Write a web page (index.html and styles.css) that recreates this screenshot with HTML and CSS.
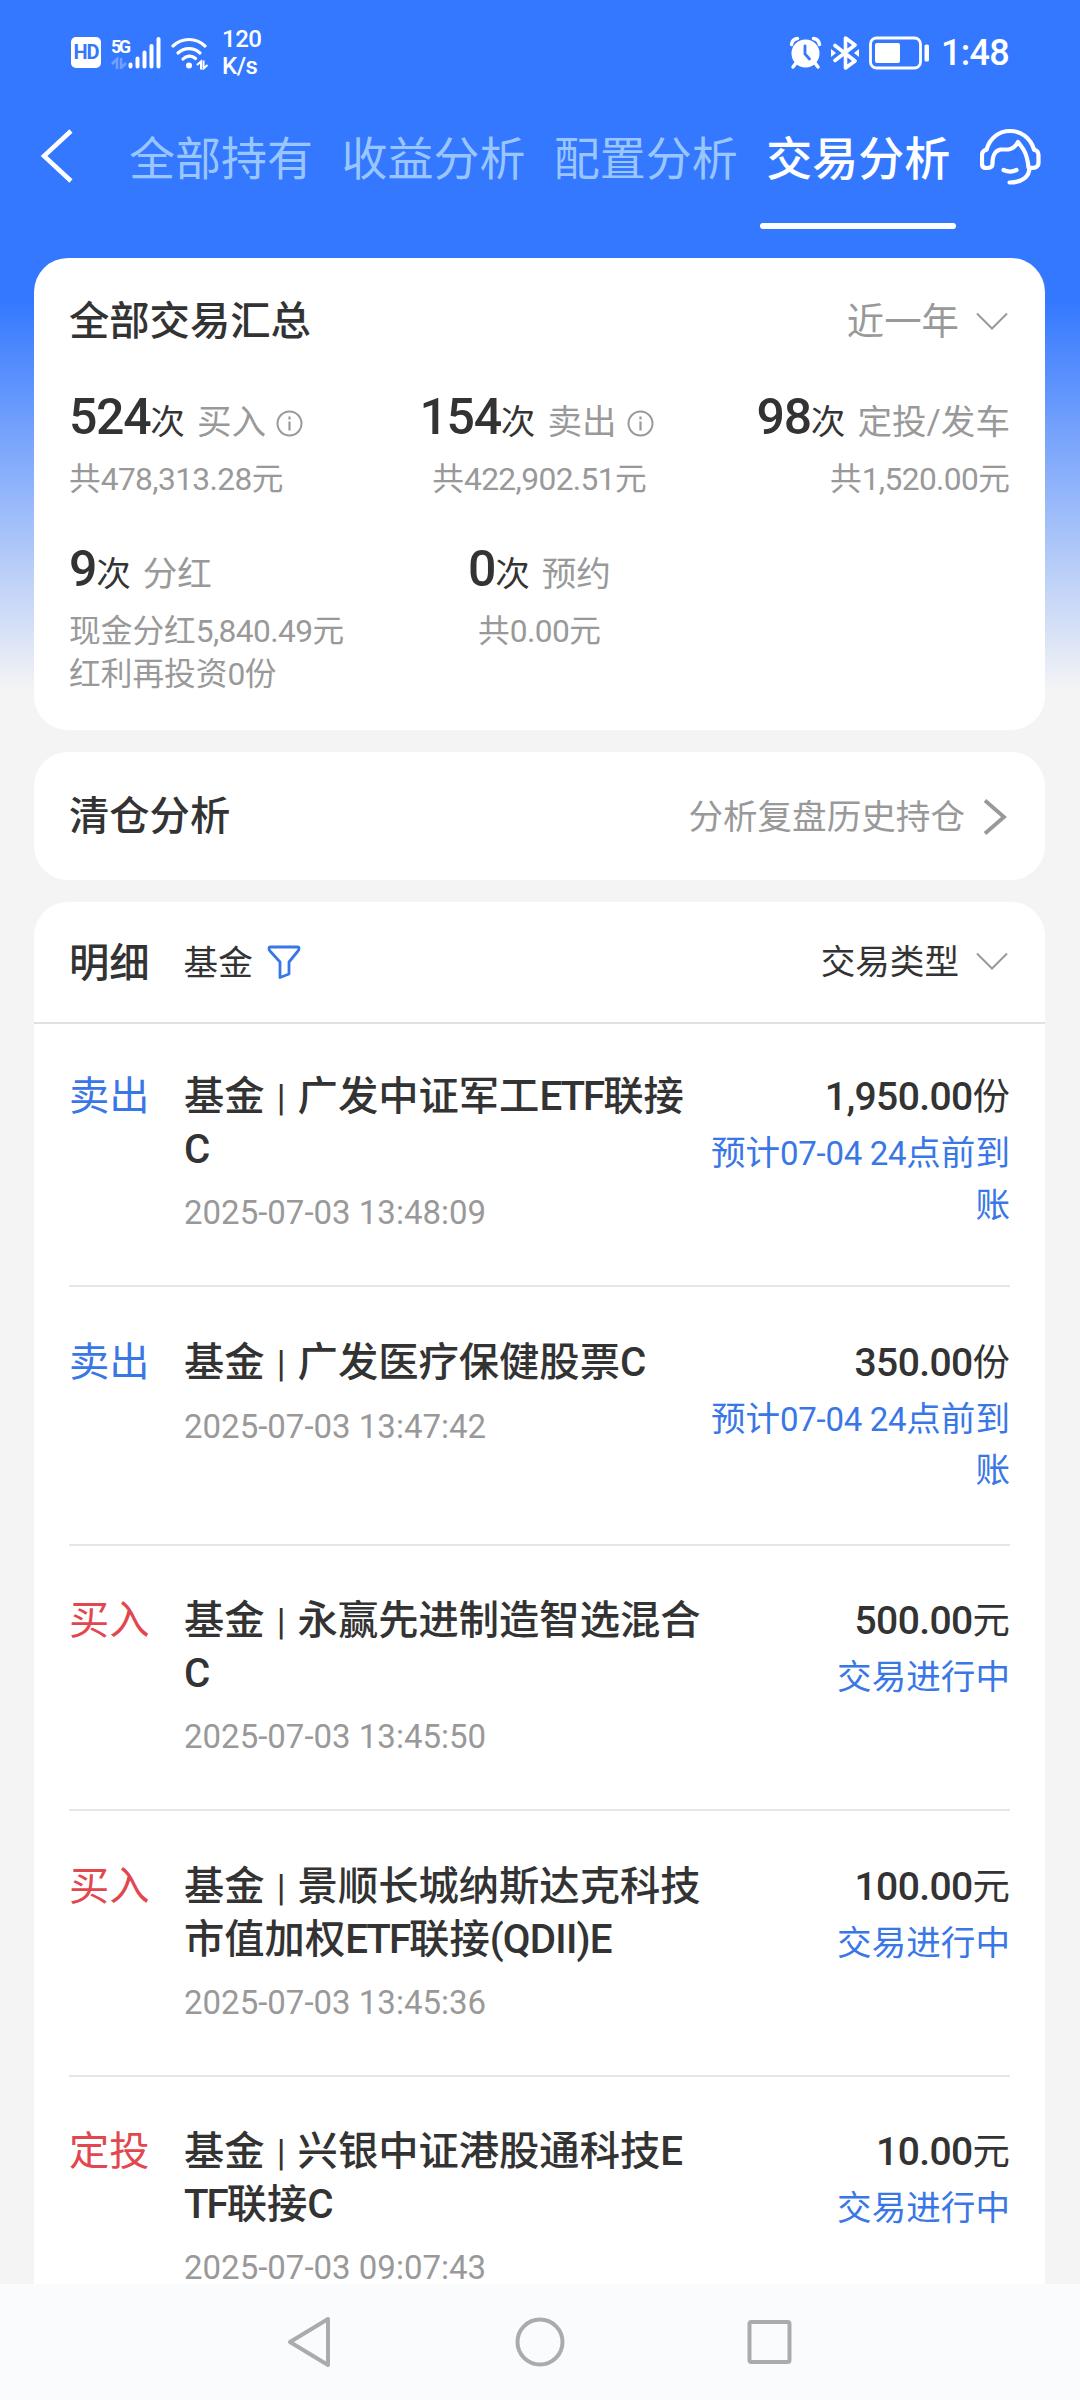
FILE: index.html
```html
<!DOCTYPE html>
<html lang="zh-CN">
<head>
    <meta charset="UTF-8">
    <meta name="viewport" content="width=device-width, initial-scale=1.0">
    <title>交易分析</title>
    <link rel="stylesheet" href="styles.css">
</head>
<body>
    <div class="status-bar">
        <div class="status-left">
            <span class="hd">HD</span>
            <div class="signal">
                <div class="network">
                    <span>5G</span>
                    <svg width="16" height="12" viewBox="0 0 16 12"><path d="M1 7l5-5v10M10 1v10l5-5" fill="none" stroke="#fff" stroke-width="2.5" opacity="0.3"/></svg>
                </div>
                <svg width="33" height="32" viewBox="0 0 33 32">
                    <path d="M2.500 27.500v2M9.500 21.500v8M16.500 15.500v14M23.500 9v20.500M30.500 2v27.500" stroke="#fff" stroke-width="4" stroke-linecap="round"/>
                </svg>
            </div>
            <svg class="wifi" width="38" height="34" viewBox="0 0 38 34">
                <g fill="none" stroke="#fff" stroke-width="3.200" stroke-linecap="round">
                    <path d="M2 10a23 23 0 0 1 32 0"/>
                    <path d="M7 17a16 16 0 0 1 22 0"/>
                    <path d="M12 23a9 9 0 0 1 12.500-.5"/>
                </g>
                <circle cx="18" cy="29.500" r="3" fill="#fff"/>
                <path d="M26 29l4-3.500v8M32.500 24.500v8l4-3.500" fill="none" stroke="#fff" stroke-width="2"/>
            </svg>
            <div class="speed">120<br>K/s</div>
        </div>
        <div class="status-right">
            <svg width="33" height="34" viewBox="0 0 33 34">
                <path d="M2.500 8.500a7 7 0 0 1 6-6M30.500 8.500a7 7 0 0 0-6-6" fill="none" stroke="#fff" stroke-width="3.500" stroke-linecap="round"/>
                <path d="M7 27l-3 4M26 27l3 4" stroke="#fff" stroke-width="3.500" stroke-linecap="round"/>
                <circle cx="16.500" cy="17.500" r="14" fill="#fff"/>
                <path d="M16 10v8l4.500 5" fill="none" stroke="#3478ff" stroke-width="2.800" stroke-linecap="round"/>
            </svg>
            <svg class="bluetooth" width="28" height="34" viewBox="0 0 28 34">
                <path d="M4 9.500l20 15.500-9.500 7V2L24 9 4 24.500" fill="none" stroke="#fff" stroke-width="3.600" stroke-linejoin="round" stroke-linecap="round"/>
                <path d="M0 13l5 4-5 4zM28 13l-5 4 5 4z" fill="#fff"/>
            </svg>
            <svg class="battery" width="61" height="34" viewBox="0 0 61 34">
                <rect x="1.500" y="2" width="50" height="30" rx="6" fill="none" stroke="#fff" stroke-width="2.800"/>
                <rect x="6" y="7" width="25" height="20" rx="2" fill="#fff"/>
                <rect x="55.500" y="8.500" width="4.500" height="17" rx="1.500" fill="#fff"/>
            </svg>
            <span class="clock">1:48</span>
        </div>
    </div>

    <div class="tabs">
        <svg class="back" width="34" height="56" viewBox="0 0 34 56">
            <path d="M31 3L4 28l27 25" fill="none" stroke="#fff" stroke-width="4.500"/>
        </svg>
        <div class="tab">全部持有</div>
        <div class="tab">收益分析</div>
        <div class="tab">配置分析</div>
        <div class="tab active">交易分析</div>
        <svg class="service" width="62" height="60" viewBox="0 0 62 60">
            <g fill="none" stroke="#fff" stroke-width="4.200" stroke-linecap="round" stroke-linejoin="round">
                <path d="M6.500 21.500C10 10 19 3 30 3s20.500 7 24 18.500"/>
                <path d="M6.500 21.500C3.500 22.500 2 24 2 27v9c0 3 1.500 4 4.500 4s6-.5 6-4c0-7 1-13 8-14.500h8c4-.5 7-3 9.500-7.500 4.500 6 9 10 10.500 25.500 7 1 10-.5 10-5V27c0-3-1.500-4.500-4.500-5.500"/>
                <path d="M49.500 39.500c0 9-7 15-20 15"/>
                <path d="M23.500 42c4.500 2 9 2 13 0"/>
            </g>
        </svg>
    </div>

    <div class="card summary">
        <div class="card-head">
            <h2>全部交易汇总</h2>
            <div class="picker">近一年
                <svg class="down" width="32" height="20" viewBox="0 0 32 20"><path d="M1 1.500l15 15 15-15" fill="none" stroke="#999" stroke-width="2"/></svg>
            </div>
        </div>
        <div class="stats">
            <div class="stat">
                <div class="count"><b>524</b>次 <span>买入</span>
                    <svg class="info" width="27" height="27" viewBox="0 0 27 27"><circle cx="13.500" cy="13.500" r="12" fill="none" stroke="#999" stroke-width="2"/><path d="M13.500 11.500v9M13.500 6.500v3" stroke="#999" stroke-width="2.200"/></svg>
                </div>
                <p>共<i>478,313.28</i>元</p>
            </div>
            <div class="stat center">
                <div class="count"><b>154</b>次 <span>卖出</span>
                    <svg class="info" width="27" height="27" viewBox="0 0 27 27"><circle cx="13.500" cy="13.500" r="12" fill="none" stroke="#999" stroke-width="2"/><path d="M13.500 11.500v9M13.500 6.500v3" stroke="#999" stroke-width="2.200"/></svg>
                </div>
                <p>共<i>422,902.51</i>元</p>
            </div>
            <div class="stat right">
                <div class="count"><b>98</b>次 <span>定投/发车</span></div>
                <p>共<i>1,520.00</i>元</p>
            </div>
            <div class="stat">
                <div class="count"><b>9</b>次 <span>分红</span></div>
                <p>现金分红<i>5,840.49</i>元<br>红利再投资<i>0</i>份</p>
            </div>
            <div class="stat center">
                <div class="count"><b>0</b>次 <span>预约</span></div>
                <p>共<i>0.00</i>元</p>
            </div>
        </div>
    </div>

    <div class="card clearance">
        <h2>清仓分析</h2>
        <div class="link"><span>分析复盘历史持仓</span>
            <svg class="next" width="24" height="36" viewBox="0 0 24 36"><path d="M2 1.500l19 16.500L2 34.500" fill="none" stroke="#999" stroke-width="3.800"/></svg>
        </div>
    </div>

    <div class="card details">
        <div class="details-head">
            <h2>明细</h2>
            <span class="kind">基金</span>
            <svg class="filter" width="34" height="34" viewBox="0 0 34 34"><path d="M2 3.500c0-1 .5-1.500 1.500-1.500h27c1 0 1.500.5 1.500 1.500 0 1-.5 2-1 2.500l-9 11v12l-9 3.500V17L3 6c-.5-.5-1-1.500-1-2.500z" fill="none" stroke="#3a77e6" stroke-width="2.800" stroke-linejoin="round"/></svg>
            <div class="picker dark">交易类型
                <svg class="down" width="32" height="20" viewBox="0 0 32 20"><path d="M1 1.500l15 15 15-15" fill="none" stroke="#999" stroke-width="2"/></svg>
            </div>
        </div>

        <div class="row">
            <div class="type sell">卖出</div>
            <div class="fund">
                <h3>基金<span class="bar">|</span>广发中证军工<i>ETF</i>联接<br>C</h3>
                <time>2025-07-03 13:48:09</time>
            </div>
            <div class="amount"><strong><i>1,950.00</i>份</strong><p>预计<i>07-04 24</i>点前到<br>账</p></div>
        </div>
        <div class="row">
            <div class="type sell">卖出</div>
            <div class="fund">
                <h3>基金<span class="bar">|</span>广发医疗保健股票<i>C</i></h3>
                <time>2025-07-03 13:47:42</time>
            </div>
            <div class="amount"><strong><i>350.00</i>份</strong><p>预计<i>07-04 24</i>点前到<br>账</p></div>
        </div>
        <div class="row">
            <div class="type buy">买入</div>
            <div class="fund">
                <h3>基金<span class="bar">|</span>永赢先进制造智选混合<br>C</h3>
                <time>2025-07-03 13:45:50</time>
            </div>
            <div class="amount"><strong><i>500.00</i>元</strong><p>交易进行中</p></div>
        </div>
        <div class="row">
            <div class="type buy">买入</div>
            <div class="fund">
                <h3>基金<span class="bar">|</span>景顺长城纳斯达克科技<br>市值加权<i>ETF</i>联接<i class="wide">(QDII)E</i></h3>
                <time>2025-07-03 13:45:36</time>
            </div>
            <div class="amount"><strong><i>100.00</i>元</strong><p>交易进行中</p></div>
        </div>
        <div class="row">
            <div class="type buy">定投</div>
            <div class="fund">
                <h3>基金<span class="bar">|</span>兴银中证港股通科技<i>E</i><br><i>TF</i>联接<i>C</i></h3>
                <time>2025-07-03 09:07:43</time>
            </div>
            <div class="amount"><strong><i>10.00</i>元</strong><p>交易进行中</p></div>
        </div>
    </div>

    <div class="nav-bar">
        <svg width="50" height="52" viewBox="0 0 50 52"><path d="M43 3v46L5 26z" fill="none" stroke="#aaabad" stroke-width="4" stroke-linejoin="round"/></svg>
        <svg width="50" height="52" viewBox="0 0 50 52"><circle cx="25" cy="26" r="22.500" fill="none" stroke="#aaabad" stroke-width="4"/></svg>
        <svg width="50" height="52" viewBox="0 0 50 52"><rect x="4.500" y="6" width="40" height="40" rx="2" fill="none" stroke="#aaabad" stroke-width="4"/></svg>
    </div>
</body>
</html>
```
FILE: styles.css
```css
* {
    box-sizing: border-box;
    margin: 0;
    padding: 0;
}
body {
    width: 1080px;
    height: 2400px;
    overflow: hidden;
    display: flex;
    flex-direction: column;
    font-family: Roboto, "Noto Sans CJK SC", sans-serif;
    color: #333;
    background: linear-gradient(180deg, #3478ff 0, #3478ff 300px, #f4f4f5 690px);
}
svg {
    display: block;
    flex: none;
}
i {
    font-style: normal;
}
h2 {
    font-size: 40.3px;
    font-weight: 500;
    line-height: 52px;
}

/* status bar */
.status-bar {
    height: 106px;
    padding: 0 71px 1px;
    display: flex;
    justify-content: space-between;
    align-items: center;
    color: #fff;
}
.status-left, .status-right {
    display: flex;
    align-items: center;
}
.hd {
    width: 30px;
    height: 31px;
    border-radius: 5px;
    background: #fff;
    color: #3478ff;
    font-size: 20px;
    font-weight: 700;
    line-height: 31px;
    text-align: center;
    letter-spacing: -1px;
}
.signal {
    display: flex;
    align-items: flex-end;
    margin-left: 10px;
}
.network {
    width: 17px;
}
.network span {
    display: block;
    font-size: 18px;
    font-weight: 700;
    line-height: 20px;
    letter-spacing: -2.5px;
    white-space: nowrap;
}
.wifi {
    margin-left: 10px;
}
.speed {
    margin-left: 13px;
    font-size: 24px;
    font-weight: 500;
    line-height: 27px;
    letter-spacing: -0.5px;
}
.bluetooth {
    margin-left: 9px;
}
.battery {
    margin-left: 10px;
}
.clock {
    margin-left: 11px;
    font-size: 36px;
    font-weight: 500;
    line-height: 40px;
    letter-spacing: -0.7px;
}

/* top tabs */
.tabs {
    height: 152px;
    padding: 0 39px 0 40px;
    display: flex;
    align-items: flex-start;
}
.back {
    margin-top: 22px;
    margin-right: 55px;
}
.tab {
    height: 123px;
    margin-right: 28.4px;
    font-size: 46px;
    line-height: 106px;
    color: #9ac6ff;
    white-space: nowrap;
}
.tab.active {
    position: relative;
    color: #fff;
    font-weight: 500;
}
.tab.active::after {
    content: "";
    position: absolute;
    left: -6px;
    right: -6px;
    bottom: 0;
    height: 6px;
    border-radius: 3px;
    background: #fff;
}
.service {
    margin-top: 22px;
    margin-left: 1px;
}

/* cards */
.card {
    width: 1011px;
    margin: 0 35px 22px 34px;
    padding: 0 35px;
    background: #fff;
    border-radius: 34px;
}
.card-head {
    display: flex;
    justify-content: space-between;
    align-items: center;
    padding-top: 38px;
}
.picker {
    display: flex;
    align-items: center;
    font-size: 37.4px;
    line-height: 52px;
    color: #999;
}
.picker.dark {
    margin-left: auto;
    font-size: 34.6px;
    color: #333;
}
.down {
    margin-left: 17px;
    margin-right: 2px;
}
.summary {
    height: 472px;
}
.stats {
    display: grid;
    grid-template-columns: 1fr 1fr 1fr;
    padding-top: 34px;
}
.stat {
    height: 152px;
}
.count {
    display: flex;
    align-items: baseline;
    height: 76px;
    font-size: 34.6px;
    line-height: 70px;
    white-space: nowrap;
}
.count b {
    font-size: 50px;
    font-weight: 500;
    letter-spacing: -1.3px;
}
.count span {
    margin-left: 12px;
    color: #999;
}
.info {
    margin-left: 10px;
    position: relative;
    top: 3px;
}
.center .info {
    margin-right: 6px;
}
.stat p {
    font-size: 31.7px;
    line-height: 43px;
    color: #999;
    white-space: nowrap;
}
.stat p i {
    letter-spacing: -0.6px;
}
.center .count {
    justify-content: center;
}
.center {
    text-align: center;
}
.right .count {
    justify-content: flex-end;
}
.right {
    text-align: right;
}
.clearance {
    height: 128px;
    padding-top: 1px;
    display: flex;
    justify-content: space-between;
    align-items: center;
}
.link {
    display: flex;
    align-items: center;
    font-size: 34.6px;
    color: #999;
}
.link span {
    margin-top: -6px;
}
.next {
    margin-left: 18px;
    margin-right: 3px;
}

/* detail list */
.details {
    flex: 1;
    min-height: 0;
    margin-bottom: 0;
    border-radius: 34px 34px 0 0;
    overflow: hidden;
}
.details-head {
    height: 122px;
    margin: 0 -35px;
    padding: 0 35px;
    display: flex;
    align-items: center;
    border-bottom: 2px solid #e1e1e3;
}
.details-head h2 {
    padding-top: 4px;
}
.kind {
    margin-left: 34px;
    margin-top: -4px;
    font-size: 34.6px;
}
.filter {
    margin-left: 14px;
}
.row {
    display: flex;
    padding: 49.5px 0 52px;
    border-bottom: 2px solid #e6e6e8;
}
.details-head + .row {
    padding-top: 47px;
}
.type {
    width: 115px;
    font-size: 40.3px;
    line-height: 52px;
}
.sell {
    color: #3a77e6;
}
.buy {
    color: #e2474f;
}
.fund h3 {
    font-size: 40.3px;
    font-weight: 500;
    line-height: 52px;
    white-space: nowrap;
}
.fund h3 i {
    letter-spacing: -2px;
}
.fund h3 .wide {
    letter-spacing: -0.8px;
}
.bar {
    display: inline-block;
    width: 33px;
    text-align: center;
    font-weight: 400;
    font-size: 36px;
}
.fund time {
    display: block;
    margin-top: 20px;
    margin-bottom: 3px;
    font-size: 33px;
    line-height: 34px;
    color: #999;
}
.amount {
    margin-left: auto;
    margin-bottom: -5px;
    text-align: right;
    white-space: nowrap;
}
.amount strong {
    display: block;
    font-size: 37.4px;
    font-weight: 400;
    line-height: 52px;
}
.amount strong i {
    font-size: 39px;
    font-weight: 500;
    letter-spacing: -0.6px;
}
.amount p {
    margin-top: 5px;
    font-size: 34.6px;
    line-height: 51.5px;
    color: #3a77e6;
}
.amount p i {
    font-size: 33px;
    letter-spacing: -0.3px;
}

/* system navigation */
.nav-bar {
    height: 116px;
    flex: none;
    padding: 0 285px;
    display: flex;
    justify-content: space-between;
    align-items: center;
    background: #fafbfd;
}
```
